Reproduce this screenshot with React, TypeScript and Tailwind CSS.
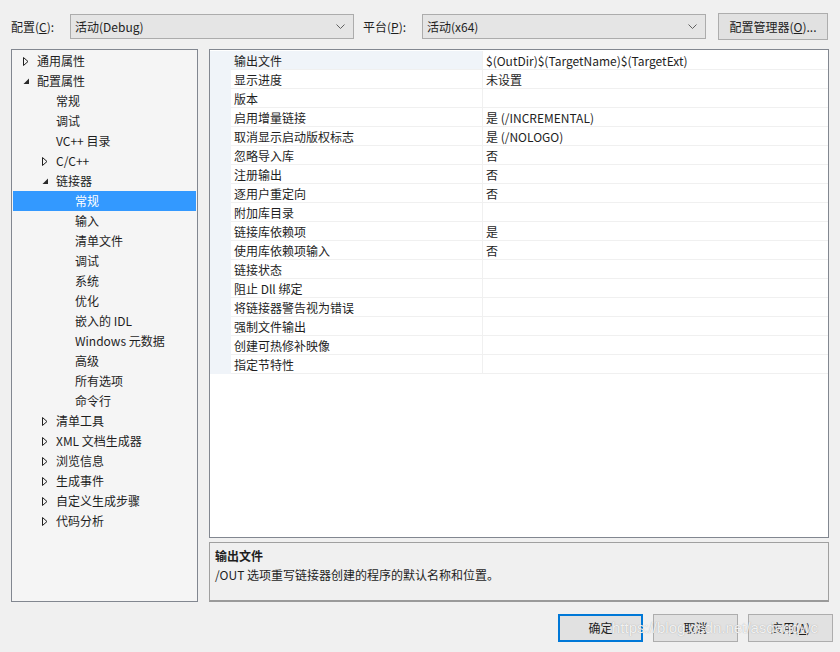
import type { ReactNode } from 'react';

type TreeItem = { label: string; level: number; state?: 'open' | 'closed'; selected?: boolean };

const tree: TreeItem[] = [
  { label: '通用属性', level: 0, state: 'closed' },
  { label: '配置属性', level: 0, state: 'open' },
  { label: '常规', level: 1 },
  { label: '调试', level: 1 },
  { label: 'VC++ 目录', level: 1 },
  { label: 'C/C++', level: 1, state: 'closed' },
  { label: '链接器', level: 1, state: 'open' },
  { label: '常规', level: 2, selected: true },
  { label: '输入', level: 2 },
  { label: '清单文件', level: 2 },
  { label: '调试', level: 2 },
  { label: '系统', level: 2 },
  { label: '优化', level: 2 },
  { label: '嵌入的 IDL', level: 2 },
  { label: 'Windows 元数据', level: 2 },
  { label: '高级', level: 2 },
  { label: '所有选项', level: 2 },
  { label: '命令行', level: 2 },
  { label: '清单工具', level: 1, state: 'closed' },
  { label: 'XML 文档生成器', level: 1, state: 'closed' },
  { label: '浏览信息', level: 1, state: 'closed' },
  { label: '生成事件', level: 1, state: 'closed' },
  { label: '自定义生成步骤', level: 1, state: 'closed' },
  { label: '代码分析', level: 1, state: 'closed' },
];

const props: [string, string][] = [
  ['输出文件', '$(OutDir)$(TargetName)$(TargetExt)'],
  ['显示进度', '未设置'],
  ['版本', ''],
  ['启用增量链接', '是 (/INCREMENTAL)'],
  ['取消显示启动版权标志', '是 (/NOLOGO)'],
  ['忽略导入库', '否'],
  ['注册输出', '否'],
  ['逐用户重定向', '否'],
  ['附加库目录', ''],
  ['链接库依赖项', '是'],
  ['使用库依赖项输入', '否'],
  ['链接状态', ''],
  ['阻止 Dll 绑定', ''],
  ['将链接器警告视为错误', ''],
  ['强制文件输出', ''],
  ['创建可热修补映像', ''],
  ['指定节特性', ''],
];

function Arrow({ state }: { state?: 'open' | 'closed' }) {
  if (!state) return <span className="w-[24px] shrink-0" />;
  return (
    <span className="flex w-[24px] shrink-0 items-center pl-[10px]">
      {state === 'closed' ? (
        <svg width="6" height="9" viewBox="0 0 6 9">
          <path d="M0.5 0.5 L5 4.5 L0.5 8.5 Z" fill="none" stroke="#1e1e1e" strokeWidth="1" />
        </svg>
      ) : (
        <svg width="7" height="7" viewBox="0 0 7 7">
          <path d="M6 0.5 L6 6 L0.5 6 Z" fill="#2a2a2a" />
        </svg>
      )}
    </span>
  );
}

function Dropdown({ value }: { value: string }) {
  return (
    <div className="flex h-[25px] w-[284px] items-center justify-between border border-[#acacac] bg-[#e5e5e5] pl-[4px] pr-[8px] text-[12px] text-[#1e1e1e]">
      <span className="leading-[16px]">{value}</span>
      <svg width="9" height="5" viewBox="0 0 9 5">
        <path d="M0.5 0.5 L4.5 4.5 L8.5 0.5" fill="none" stroke="#606060" strokeWidth="1" />
      </svg>
    </div>
  );
}

function Btn({ children, primary }: { children: ReactNode; primary?: boolean }) {
  return (
    <div
      className={
        primary
          ? 'flex h-[28px] w-[85px] items-center justify-center border-2 border-[#0078d7] bg-[#e1e1e1] text-[12px] text-[#1e1e1e]'
          : 'flex h-[28px] w-[85px] items-center justify-center border border-[#adadad] bg-[#e1e1e1] text-[12px] text-[#1e1e1e]'
      }
    >
      {children}
    </div>
  );
}

export default function App() {
  return (
    <div className="relative h-[652px] w-[840px] overflow-hidden bg-[#f0f0f0] font-['Noto_Sans_CJK_SC','Noto_Sans',sans-serif] text-[12px] text-[#1e1e1e]">
      <div className="flex h-[40px] items-center pl-[11px] pt-[13px]">
        <span className="w-[59px] leading-[16px]">
          配置(<span className="underline">C</span>):
        </span>
        <Dropdown value="活动(Debug)" />
        <span className="ml-[9px] w-[59px] leading-[16px]">
          平台(<span className="underline">P</span>):
        </span>
        <Dropdown value="活动(x64)" />
        <div className="ml-[12px] flex h-[27px] w-[110px] items-center justify-center border border-[#adadad] bg-[#e1e1e1] leading-[16px]">
          配置管理器(<span className="underline">O</span>)...
        </div>
      </div>

      <div className="mt-[9px] flex pl-[11px]">
        <div className="h-[553px] w-[187px] border border-[#828790] bg-[#f5f5f5] px-px pt-px">
          {tree.map((t, i) => (
            <div
              key={i}
              className={
                t.selected
                  ? 'flex h-[20px] items-center bg-[#3399ff] text-white'
                  : 'flex h-[20px] items-center'
              }
              style={{ paddingLeft: t.level * 19 }}
            >
              <Arrow state={t.state} />
              <span className="leading-[16px]">{t.label}</span>
            </div>
          ))}
        </div>

        <div className="ml-[11px] flex w-[620px] flex-col">
          <div className="h-[489px] border border-[#828790] bg-white pt-px">
            <div className="flex">
              <div className="w-[21px] bg-[#f0f4f9]" />
              <div className="flex-1">
                {props.map(([k, v], i) => (
                  <div key={i} className="flex h-[19px] border-b border-[#f0f0f0]">
                    <div
                      className={
                        i === 0
                          ? 'flex w-[252px] items-center border-r border-[#f0f0f0] bg-[#f0f4f9] pl-[3px]'
                          : 'flex w-[252px] items-center border-r border-[#f0f0f0] pl-[3px]'
                      }
                    >
                      <span className="mt-px leading-[16px]">{k}</span>
                    </div>
                    <div className="flex flex-1 items-center pl-[3px]">
                      <span className="mt-px leading-[16px]">{v}</span>
                    </div>
                  </div>
                ))}
              </div>
            </div>
          </div>
          <div className="mt-[4px] h-[60px] border border-b-2 border-[#a0a0a0] border-b-[#9a9a9a] bg-[#f0f0f0] px-[5px] pt-[3px]">
            <div className="font-bold leading-[19px]">输出文件</div>
            <div className="leading-[19px]">/OUT 选项重写链接器创建的程序的默认名称和位置。</div>
          </div>
        </div>
      </div>

      <div className="mt-[12px] flex justify-end gap-[10px] pr-[7px]">
        <Btn primary>确定</Btn>
        <Btn>取消</Btn>
        <Btn>
          应用(<span className="underline">A</span>)
        </Btn>
      </div>

      <div className="pointer-events-none absolute left-[612px] top-[617px] font-['Liberation_Sans',sans-serif] text-[15px] text-white/85 [text-shadow:0_0_1px_rgba(120,120,120,0.7)]">
        https://blog.csdn.net/asdaqqwc
      </div>
    </div>
  );
}
